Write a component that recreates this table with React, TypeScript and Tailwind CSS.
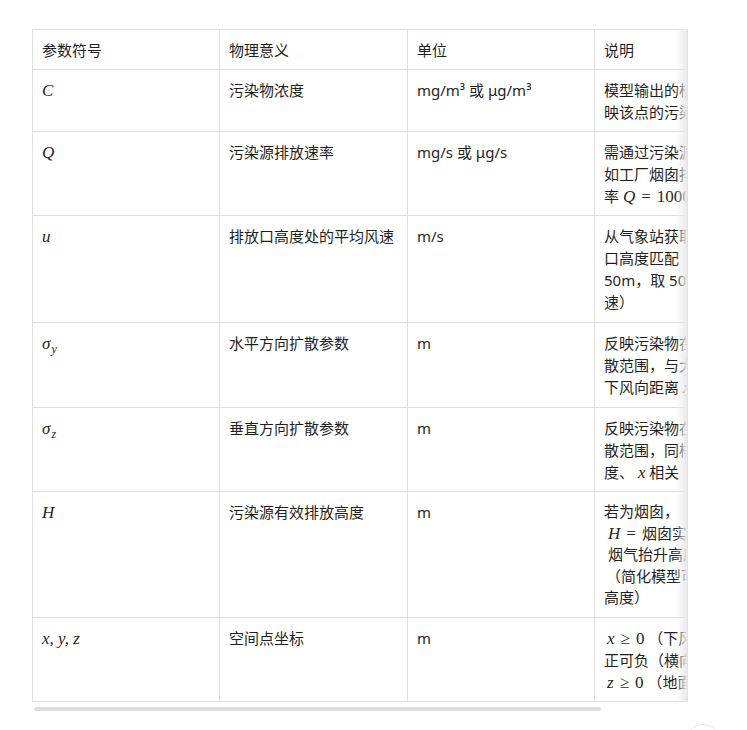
import React from 'react';

const ui = '"Noto Sans", "Noto Sans CJK SC", sans-serif';
const tex = '"Liberation Serif", "DejaVu Serif", serif';

function I({ children }: { children: React.ReactNode }) {
  return (
    <span className="italic text-[17px] leading-none" style={{ fontFamily: tex }}>
      {children}
    </span>
  );
}

function R({ children }: { children: React.ReactNode }) {
  return (
    <span className="text-[17px] leading-none" style={{ fontFamily: tex }}>
      {children}
    </span>
  );
}

function Sigma({ sub }: { sub: string }) {
  return (
    <span style={{ fontFamily: tex }} className="italic leading-none">
      <span className="text-[17px]">σ</span>
      <span className="text-[12px] relative top-[4px] ml-[1px]">{sub}</span>
    </span>
  );
}

type Row = {
  sym: React.ReactNode;
  meaning: string;
  unit: string;
  notes: React.ReactNode[];
  tight?: boolean;
  extra?: boolean;
};

const rows: Row[] = [
  {
    sym: <I>C</I>,
    meaning: '污染物浓度',
    unit: 'mg/m³ 或 μg/m³',
    notes: ['模型输出的核心结果，反', '映该点的污染物浓度水平'],
  },
  {
    sym: <I>Q</I>,
    meaning: '污染源排放速率',
    unit: 'mg/s 或 μg/s',
    notes: [
      '需通过污染源监测获取，例',
      '如工厂烟囱排放速',
      <>
        率 <I>Q</I>
        <R>
          <span className="mx-[6px]">=</span>1000
        </R>
      </>,
    ],
  },
  {
    sym: <I>u</I>,
    meaning: '排放口高度处的平均风速',
    unit: 'm/s',
    extra: true,
    notes: ['从气象站获取，需与排放', '口高度匹配', '50m，取 50m 高度风', '速）'],
  },
  {
    sym: <Sigma sub="y" />,
    meaning: '水平方向扩散参数',
    unit: 'm',
    extra: true,
    notes: [
      '反映污染物在水平方向扩',
      '散范围，与大气稳定度、',
      <>
        下风向距离 <I>x</I>
      </>,
    ],
  },
  {
    sym: <Sigma sub="z" />,
    meaning: '垂直方向扩散参数',
    unit: 'm',
    notes: [
      '反映污染物在垂直方向扩',
      '散范围，同样与大气稳定',
      <>
        度、 <I>x</I> 相关
      </>,
    ],
  },
  {
    sym: <I>H</I>,
    meaning: '污染源有效排放高度',
    unit: 'm',
    tight: true,
    notes: [
      '若为烟囱，',
      <>
        <span className="ml-[4px]" />
        <I>H</I>
        <R>
          <span className="mx-[6px]">=</span>
        </R>
        烟囱实际高度 +
      </>,
      <span className="ml-[4px]">烟气抬升高度</span>,
      <span className="ml-[2px]">（简化模型可直接用烟囱</span>,
      '高度）',
    ],
  },
  {
    sym: (
      <span className="italic text-[17px] leading-none" style={{ fontFamily: tex }}>
        x, y, z
      </span>
    ),
    meaning: '空间点坐标',
    unit: 'm',
    notes: [
      <>
        <span className="ml-[3px]" />
        <I>x</I>
        <R>
          <span className="mx-[6px]">≥</span>0
        </R>{' '}
        （下风向）
      </>,
      '正可负（横向）',
      <>
        <span className="ml-[3px]" />
        <I>z</I>
        <R>
          <span className="mx-[6px]">≥</span>0
        </R>{' '}
        （地面以上）
      </>,
    ],
  },
];

const cell = 'border border-[#dfdfdf] align-top pl-[9px] pr-[9px] pt-[9px]';

function Line({ children, tight }: { children: React.ReactNode; tight?: boolean }) {
  return (
    <div className={`whitespace-nowrap ${tight ? 'h-[21.6px] leading-[21.6px]' : 'h-[22px] leading-[22px]'}`}>
      {children}
    </div>
  );
}

export default function App() {
  return (
    <div className="min-h-[730px] bg-white relative overflow-hidden" style={{ fontFamily: ui }}>
      <div className="pl-[32px] pt-[29px]">
        <div className="relative w-[656px] overflow-hidden">
          <table className="table-fixed border-collapse w-[751px] text-[15px] leading-[22px] text-[#1f1f1f]">
            <colgroup>
              <col className="w-[187px]" />
              <col className="w-[188px]" />
              <col className="w-[187px]" />
              <col className="w-[188px]" />
            </colgroup>
            <thead>
              <tr>
                {['参数符号', '物理意义', '单位', '说明'].map((h) => (
                  <th key={h} className={`${cell} pb-[8px] font-normal text-left`}>
                    <Line>{h}</Line>
                  </th>
                ))}
              </tr>
            </thead>
            <tbody>
              {rows.map((r, i) => {
                const pad = r.extra ? 'pb-[9px]' : 'pb-[8px]';
                return (
                  <tr key={i}>
                    <td className={`${cell} ${pad}`}>
                      <Line>{r.sym}</Line>
                    </td>
                    <td className={`${cell} ${pad}`}>
                      <Line>{r.meaning}</Line>
                    </td>
                    <td className={`${cell} ${pad}`}>
                      <Line>{r.unit}</Line>
                    </td>
                    <td className={`${cell} ${pad}`}>
                      {r.notes.map((n, j) => (
                        <Line key={j} tight={r.tight}>
                          {n}
                        </Line>
                      ))}
                    </td>
                  </tr>
                );
              })}
            </tbody>
          </table>
          <div className="absolute top-0 right-0 w-[12px] h-[673px] bg-gradient-to-r from-transparent to-[#e9e9e9] border-r border-[#e2e2e2]" />
          <div className="mt-[5px] ml-[2px] h-[4px] w-[567px] rounded-full bg-[#dcdde0]" />
        </div>
      </div>
      <div className="absolute left-[686px] top-[724px] w-[34px] h-[34px] rounded-full border border-[#e6e6e6] bg-white" />
    </div>
  );
}
